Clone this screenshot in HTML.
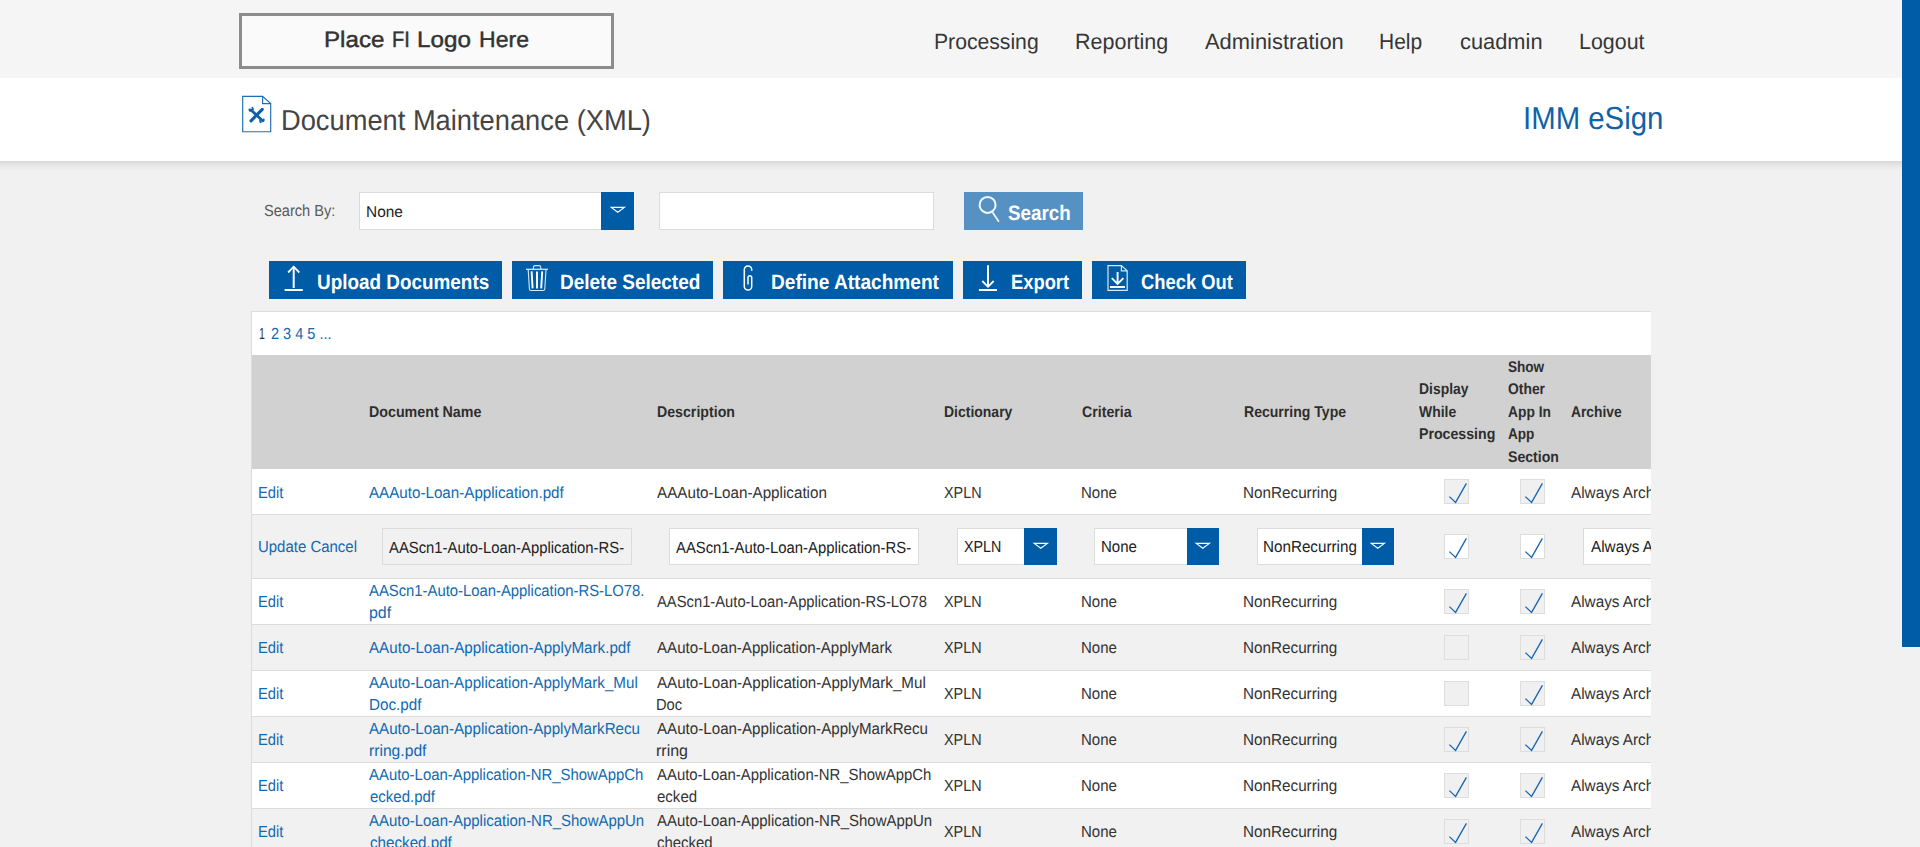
<!DOCTYPE html>
<html><head><meta charset="utf-8"><title>Document Maintenance (XML)</title>
<style>
html,body{margin:0;padding:0}
body{width:1920px;height:847px;overflow:hidden;position:relative;background:#f1f1f1;font-family:"Liberation Sans",sans-serif}
#root{position:absolute;left:0;top:0;width:1920px;height:847px;overflow:hidden}
#root>div{position:absolute}
#root>div>div{position:absolute}
#root>svg{position:absolute}
.t{position:absolute;white-space:pre;transform-origin:0 50%;text-rendering:geometricPrecision;font-family:"Liberation Sans",sans-serif}
#clip{position:absolute;left:0;top:0;width:1651px;height:847px;overflow:hidden}
</style></head><body><div id="root">
<div style="left:0px;top:0px;width:1902px;height:78px;background:#f5f5f5"></div>
<div style="left:0px;top:78px;width:1902px;height:83px;background:#fff"></div>
<div style="left:0px;top:161px;width:1902px;height:10px;background:linear-gradient(to bottom, rgba(0,0,0,.105) 0%, rgba(0,0,0,.07) 25%, rgba(0,0,0,.03) 55%, rgba(0,0,0,0) 100%)"></div>
<div style="left:239px;top:13px;width:375px;height:56px;box-sizing:border-box;border:3px solid #8c8c8c;background:#fafafa"></div>
<div style="left:1902px;top:0px;width:18px;height:647px;background:#005ca6"></div>
<div style="left:359px;top:192px;width:242px;height:38px;box-sizing:border-box;border:1px solid #dcdcdc;border-right:0;background:#fff"></div>
<div style="left:601px;top:192px;width:33px;height:38px;background:#005ca6"><svg width="18" height="10" viewBox="0 0 18 10" style="position:absolute;left:7.8999999999999995px;top:13.0px"><path d="M2.2 2.4 H15.4 L8.8 7.2 Z" fill="none" stroke="#fff" stroke-width="1.1" stroke-linejoin="miter"/></svg></div>
<div style="left:659px;top:192px;width:275px;height:38px;box-sizing:border-box;border:1px solid #dcdcdc;background:#fff"></div>
<div style="left:964px;top:192px;width:119px;height:38px;background:#5591c3"></div>
<div style="left:269px;top:261px;width:233px;height:38px;background:#005ca6"></div>
<div style="left:512px;top:261px;width:201px;height:38px;background:#005ca6"></div>
<div style="left:723px;top:261px;width:230px;height:38px;background:#005ca6"></div>
<div style="left:963px;top:261px;width:119px;height:38px;background:#005ca6"></div>
<div style="left:1092px;top:261px;width:154px;height:38px;background:#005ca6"></div>
<div style="left:251px;top:311px;width:1400px;height:540px;box-sizing:border-box;border:1px solid #dddddd;border-right:0;background:#fff"></div>
<div style="left:252px;top:355px;width:1399px;height:113.6px;background:#d1d1d1"></div>
<div style="left:252px;top:514px;width:1399px;height:1px;background:#dcdcdc"></div>
<div style="left:252px;top:624px;width:1399px;height:1px;background:#dcdcdc"></div>
<div style="left:252px;top:625px;width:1399px;height:45px;background:#f1f1f1"></div>
<div style="left:252px;top:670px;width:1399px;height:1px;background:#dcdcdc"></div>
<div style="left:252px;top:716px;width:1399px;height:1px;background:#dcdcdc"></div>
<div style="left:252px;top:717px;width:1399px;height:45px;background:#f1f1f1"></div>
<div style="left:252px;top:762px;width:1399px;height:1px;background:#dcdcdc"></div>
<div style="left:252px;top:808px;width:1399px;height:1px;background:#dcdcdc"></div>
<div style="left:252px;top:809px;width:1399px;height:45px;background:#f1f1f1"></div>
<div style="left:252px;top:854px;width:1399px;height:1px;background:#dcdcdc"></div>
<div style="left:252px;top:515px;width:1399px;height:63px;background:#f1f1f1"></div>
<div style="left:252px;top:578px;width:1399px;height:1px;background:#dcdcdc"></div>
<div style="left:1444px;top:479px;width:25px;height:25px;box-sizing:border-box;border:1px solid #dddddd;background:#f0f0f0"><svg width="25" height="25" viewBox="0 0 25 25" style="position:absolute;left:-1px;top:-1px"><path d="M5.4 17.6 L11.6 23.4 L22.4 4.4" fill="none" stroke="#1466b3" stroke-width="1.3" stroke-linecap="butt" stroke-linejoin="miter"/></svg></div>
<div style="left:1520px;top:479px;width:25px;height:25px;box-sizing:border-box;border:1px solid #dddddd;background:#f0f0f0"><svg width="25" height="25" viewBox="0 0 25 25" style="position:absolute;left:-1px;top:-1px"><path d="M5.4 17.6 L11.6 23.4 L22.4 4.4" fill="none" stroke="#1466b3" stroke-width="1.3" stroke-linecap="butt" stroke-linejoin="miter"/></svg></div>
<div style="left:1444px;top:589px;width:25px;height:25px;box-sizing:border-box;border:1px solid #dddddd;background:#f0f0f0"><svg width="25" height="25" viewBox="0 0 25 25" style="position:absolute;left:-1px;top:-1px"><path d="M5.4 17.6 L11.6 23.4 L22.4 4.4" fill="none" stroke="#1466b3" stroke-width="1.3" stroke-linecap="butt" stroke-linejoin="miter"/></svg></div>
<div style="left:1520px;top:589px;width:25px;height:25px;box-sizing:border-box;border:1px solid #dddddd;background:#f0f0f0"><svg width="25" height="25" viewBox="0 0 25 25" style="position:absolute;left:-1px;top:-1px"><path d="M5.4 17.6 L11.6 23.4 L22.4 4.4" fill="none" stroke="#1466b3" stroke-width="1.3" stroke-linecap="butt" stroke-linejoin="miter"/></svg></div>
<div style="left:1444px;top:635px;width:25px;height:25px;box-sizing:border-box;border:1px solid #dddddd;background:#f0f0f0"></div>
<div style="left:1520px;top:635px;width:25px;height:25px;box-sizing:border-box;border:1px solid #dddddd;background:#f0f0f0"><svg width="25" height="25" viewBox="0 0 25 25" style="position:absolute;left:-1px;top:-1px"><path d="M5.4 17.6 L11.6 23.4 L22.4 4.4" fill="none" stroke="#1466b3" stroke-width="1.3" stroke-linecap="butt" stroke-linejoin="miter"/></svg></div>
<div style="left:1444px;top:681px;width:25px;height:25px;box-sizing:border-box;border:1px solid #dddddd;background:#f0f0f0"></div>
<div style="left:1520px;top:681px;width:25px;height:25px;box-sizing:border-box;border:1px solid #dddddd;background:#f0f0f0"><svg width="25" height="25" viewBox="0 0 25 25" style="position:absolute;left:-1px;top:-1px"><path d="M5.4 17.6 L11.6 23.4 L22.4 4.4" fill="none" stroke="#1466b3" stroke-width="1.3" stroke-linecap="butt" stroke-linejoin="miter"/></svg></div>
<div style="left:1444px;top:727px;width:25px;height:25px;box-sizing:border-box;border:1px solid #dddddd;background:#f0f0f0"><svg width="25" height="25" viewBox="0 0 25 25" style="position:absolute;left:-1px;top:-1px"><path d="M5.4 17.6 L11.6 23.4 L22.4 4.4" fill="none" stroke="#1466b3" stroke-width="1.3" stroke-linecap="butt" stroke-linejoin="miter"/></svg></div>
<div style="left:1520px;top:727px;width:25px;height:25px;box-sizing:border-box;border:1px solid #dddddd;background:#f0f0f0"><svg width="25" height="25" viewBox="0 0 25 25" style="position:absolute;left:-1px;top:-1px"><path d="M5.4 17.6 L11.6 23.4 L22.4 4.4" fill="none" stroke="#1466b3" stroke-width="1.3" stroke-linecap="butt" stroke-linejoin="miter"/></svg></div>
<div style="left:1444px;top:773px;width:25px;height:25px;box-sizing:border-box;border:1px solid #dddddd;background:#f0f0f0"><svg width="25" height="25" viewBox="0 0 25 25" style="position:absolute;left:-1px;top:-1px"><path d="M5.4 17.6 L11.6 23.4 L22.4 4.4" fill="none" stroke="#1466b3" stroke-width="1.3" stroke-linecap="butt" stroke-linejoin="miter"/></svg></div>
<div style="left:1520px;top:773px;width:25px;height:25px;box-sizing:border-box;border:1px solid #dddddd;background:#f0f0f0"><svg width="25" height="25" viewBox="0 0 25 25" style="position:absolute;left:-1px;top:-1px"><path d="M5.4 17.6 L11.6 23.4 L22.4 4.4" fill="none" stroke="#1466b3" stroke-width="1.3" stroke-linecap="butt" stroke-linejoin="miter"/></svg></div>
<div style="left:1444px;top:819px;width:25px;height:25px;box-sizing:border-box;border:1px solid #dddddd;background:#f0f0f0"><svg width="25" height="25" viewBox="0 0 25 25" style="position:absolute;left:-1px;top:-1px"><path d="M5.4 17.6 L11.6 23.4 L22.4 4.4" fill="none" stroke="#1466b3" stroke-width="1.3" stroke-linecap="butt" stroke-linejoin="miter"/></svg></div>
<div style="left:1520px;top:819px;width:25px;height:25px;box-sizing:border-box;border:1px solid #dddddd;background:#f0f0f0"><svg width="25" height="25" viewBox="0 0 25 25" style="position:absolute;left:-1px;top:-1px"><path d="M5.4 17.6 L11.6 23.4 L22.4 4.4" fill="none" stroke="#1466b3" stroke-width="1.3" stroke-linecap="butt" stroke-linejoin="miter"/></svg></div>
<div style="left:1444px;top:534px;width:25px;height:25px;box-sizing:border-box;border:1px solid #dddddd;background:#fff"><svg width="25" height="25" viewBox="0 0 25 25" style="position:absolute;left:-1px;top:-1px"><path d="M5.4 17.6 L11.6 23.4 L22.4 4.4" fill="none" stroke="#1466b3" stroke-width="1.3" stroke-linecap="butt" stroke-linejoin="miter"/></svg></div>
<div style="left:1520px;top:534px;width:25px;height:25px;box-sizing:border-box;border:1px solid #dddddd;background:#fff"><svg width="25" height="25" viewBox="0 0 25 25" style="position:absolute;left:-1px;top:-1px"><path d="M5.4 17.6 L11.6 23.4 L22.4 4.4" fill="none" stroke="#1466b3" stroke-width="1.3" stroke-linecap="butt" stroke-linejoin="miter"/></svg></div>
<div style="left:382px;top:528px;width:250px;height:37px;box-sizing:border-box;border:1px solid #dcdcdc;background:#f1f1f1"></div>
<div style="left:669px;top:528px;width:250px;height:37px;box-sizing:border-box;border:1px solid #dcdcdc;background:#fff"></div>
<div style="left:957px;top:528px;width:67px;height:37px;box-sizing:border-box;border:1px solid #dcdcdc;border-right:0;background:#fff"></div>
<div style="left:1024px;top:528px;width:33px;height:37px;background:#005ca6"><svg width="18" height="10" viewBox="0 0 18 10" style="position:absolute;left:7.8999999999999995px;top:12.5px"><path d="M2.2 2.4 H15.4 L8.8 7.2 Z" fill="none" stroke="#fff" stroke-width="1.1" stroke-linejoin="miter"/></svg></div>
<div style="left:1094px;top:528px;width:93px;height:37px;box-sizing:border-box;border:1px solid #dcdcdc;border-right:0;background:#fff"></div>
<div style="left:1187px;top:528px;width:32px;height:37px;background:#005ca6"><svg width="18" height="10" viewBox="0 0 18 10" style="position:absolute;left:7.3999999999999995px;top:12.5px"><path d="M2.2 2.4 H15.4 L8.8 7.2 Z" fill="none" stroke="#fff" stroke-width="1.1" stroke-linejoin="miter"/></svg></div>
<div style="left:1257px;top:528px;width:105px;height:37px;box-sizing:border-box;border:1px solid #dcdcdc;border-right:0;background:#fff"></div>
<div style="left:1362px;top:528px;width:32px;height:37px;background:#005ca6"><svg width="18" height="10" viewBox="0 0 18 10" style="position:absolute;left:7.3999999999999995px;top:12.5px"><path d="M2.2 2.4 H15.4 L8.8 7.2 Z" fill="none" stroke="#fff" stroke-width="1.1" stroke-linejoin="miter"/></svg></div>
<div style="left:1583px;top:528px;width:68px;height:37px;box-sizing:border-box;border:1px solid #dcdcdc;border-right:0;background:#fff"></div>
<svg width="1920" height="847" viewBox="0 0 1920 847" style="left:0;top:0;pointer-events:none">
<!-- title document icon -->
<g fill="none" stroke="#1a70b8" stroke-width="1.15" stroke-linejoin="miter">
<path d="M242.7 96.4 H262.6 L270.7 103.6 V131.7 H242.7 Z"/>
<path d="M262.6 96.4 V103.6 H270.7"/>
</g>
<g fill="none" stroke="#0d5fae" stroke-linecap="round">
<path d="M251.0 109.9 L262.0 120.2" stroke-width="2.7"/>
<path d="M262.3 109.3 L251.0 120.8" stroke-width="3.1"/>
<path d="M249.3 109.2 q-0.2 2.0 1.8 1.8 M252.2 107.6 q1.4 1.0 0.4 2.6" stroke-width="1.6"/>
<path d="M263.8 119.4 q0.4 2.0 -1.4 2.0 M260.8 122.4 q-1.4 -0.8 -0.4 -2.4" stroke-width="1.6"/>
</g>
<!-- search magnifier -->
<g fill="none" stroke="#fff" stroke-opacity=".93">
<circle cx="987.6" cy="204.9" r="8" stroke-width="2"/>
<path d="M992.5 212.2 L998.9 221.8" stroke-width="1.7"/>
</g>
<!-- upload -->
<g fill="none" stroke="#fff" stroke-width="2">
<path d="M293.7 288 V266.6"/><path d="M288.1 272.5 L293.7 266.7 L299.3 272.5" stroke-width="1.8"/><path d="M284.6 290 H302.8"/>
</g>
<!-- trash -->
<g fill="none" stroke="#fff">
<path d="M526 269.3 H548" stroke-width="1.2" stroke-opacity=".9"/>
<path d="M533.4 269 V267.4 a1.8 1.8 0 0 1 1.8 -1.8 h3.8 a1.8 1.8 0 0 1 1.8 1.8 V269" stroke-width="1.1" stroke-opacity=".85"/>
<path d="M528.2 269.6 L529.4 289 a1.6 1.6 0 0 0 1.6 1.5 h12.2 a1.6 1.6 0 0 0 1.6 -1.5 L546 269.6" stroke-width="1.1" stroke-opacity=".85"/>
<path d="M531.6 271.4 L532.6 288.4 M537 271.4 V288.4 M542.2 271.4 L541.2 288.4" stroke-width="1.9"/>
</g>
<!-- paperclip -->
<path d="M751.7 270.8 V269.6 a3.7 3.7 0 0 0 -7.4 0 V286.4 a3.7 3.7 0 0 0 7.4 0 V277.6 a1.85 1.85 0 0 0 -3.7 0 V284.6" fill="none" stroke="#fff" stroke-width="1.5"/>
<!-- export/download -->
<g fill="none" stroke="#fff" stroke-width="2">
<path d="M988 265.3 V286.6"/><path d="M982.3 281 L988 286.8 L993.7 281" stroke-width="1.8"/><path d="M978.9 290 H997"/>
</g>
<!-- check out -->
<g fill="none" stroke="#fff">
<path d="M1108 265.6 H1121.4 L1127.2 270.8 V290.4 H1108 Z M1121.4 265.6 V270.8 H1127.2" stroke-width="1.2" stroke-opacity=".85"/>
<path d="M1117.6 272 V283.8 M1111.8 278.2 L1117.6 284 L1123.4 278.2 M1110 287 H1125" stroke-width="1.9"/>
</g>
</svg>

<span class="t" style="left:934.04px;top:27.00px;font-size:22.0px;line-height:29px;font-weight:400;color:#363636;transform:scaleX(0.9616)">Processing</span>
<span class="t" style="left:1075.02px;top:27.00px;font-size:22.0px;line-height:29px;font-weight:400;color:#363636;transform:scaleX(0.9769)">Reporting</span>
<span class="t" style="left:1205.00px;top:27.00px;font-size:22.0px;line-height:29px;font-weight:400;color:#363636;transform:scaleX(0.9953)">Administration</span>
<span class="t" style="left:1379.35px;top:27.00px;font-size:22.0px;line-height:29px;font-weight:400;color:#363636;transform:scaleX(0.9543)">Help</span>
<span class="t" style="left:1460.00px;top:27.00px;font-size:22.0px;line-height:29px;font-weight:400;color:#363636;transform:scaleX(0.9924)">cuadmin</span>
<span class="t" style="left:1579.03px;top:27.00px;font-size:22.0px;line-height:29px;font-weight:400;color:#363636;transform:scaleX(0.9732)">Logout</span>
<span class="t" style="left:323.82px;top:25.00px;font-size:22.3px;line-height:29px;font-weight:400;color:#333;transform:scaleX(1.0832);-webkit-text-stroke:0.45px #333">Place</span>
<span class="t" style="left:391.90px;top:25.00px;font-size:22.3px;line-height:29px;font-weight:400;color:#333;transform:scaleX(0.8967);-webkit-text-stroke:0.45px #333">FI</span>
<span class="t" style="left:416.66px;top:25.00px;font-size:22.3px;line-height:29px;font-weight:400;color:#333;transform:scaleX(1.0871);-webkit-text-stroke:0.45px #333">Logo</span>
<span class="t" style="left:479.07px;top:25.00px;font-size:22.3px;line-height:29px;font-weight:400;color:#333;transform:scaleX(1.0335);-webkit-text-stroke:0.45px #333">Here</span>
<span class="t" style="left:281.11px;top:103.00px;font-size:28.8px;line-height:37px;font-weight:400;color:#444;transform:scaleX(0.9472)">Document Maintenance (XML)</span>
<span class="t" style="left:1523.15px;top:98.00px;font-size:31.8px;line-height:41px;font-weight:400;color:#0f62a8;transform:scaleX(0.9239)">IMM eSign</span>
<span class="t" style="left:263.75px;top:201.00px;font-size:16.1px;line-height:21px;font-weight:400;color:#5a5a5a;transform:scaleX(0.9062)">Search By:</span>
<span class="t" style="left:365.51px;top:203.00px;font-size:15.6px;line-height:20px;font-weight:400;color:#222;transform:scaleX(0.9900)">None</span>
<span class="t" style="left:1008.00px;top:200.00px;font-size:20.9px;line-height:27px;font-weight:700;color:#ffffff;transform:scaleX(0.8996)">Search</span>
<span class="t" style="left:317.10px;top:269.00px;font-size:20.9px;line-height:27px;font-weight:700;color:#fff;transform:scaleX(0.9047)">Upload Documents</span>
<span class="t" style="left:560.34px;top:269.00px;font-size:20.9px;line-height:27px;font-weight:700;color:#fff;transform:scaleX(0.9088)">Delete Selected</span>
<span class="t" style="left:771.09px;top:269.00px;font-size:20.9px;line-height:27px;font-weight:700;color:#fff;transform:scaleX(0.9137)">Define Attachment</span>
<span class="t" style="left:1011.12px;top:269.00px;font-size:20.9px;line-height:27px;font-weight:700;color:#fff;transform:scaleX(0.8780)">Export</span>
<span class="t" style="left:1141.00px;top:269.00px;font-size:20.9px;line-height:27px;font-weight:700;color:#fff;transform:scaleX(0.8802)">Check Out</span>
<span class="t" style="left:259.15px;top:324.00px;font-size:16.1px;line-height:21px;font-weight:400;color:#333;transform:scaleX(0.6500)">1</span>
<span class="t" style="left:270.80px;top:324.00px;font-size:16.1px;line-height:21px;font-weight:400;color:#1269b0;transform:scaleX(0.9020)">2 3 4 5 ...</span>
<span class="t" style="left:368.78px;top:403.00px;font-size:15.5px;line-height:20px;font-weight:700;color:#2e2e2e;transform:scaleX(0.9188)">Document Name</span>
<span class="t" style="left:656.59px;top:403.00px;font-size:15.5px;line-height:20px;font-weight:700;color:#2e2e2e;transform:scaleX(0.9141)">Description</span>
<span class="t" style="left:944.10px;top:403.00px;font-size:15.5px;line-height:20px;font-weight:700;color:#2e2e2e;transform:scaleX(0.9019)">Dictionary</span>
<span class="t" style="left:1082.20px;top:403.00px;font-size:15.5px;line-height:20px;font-weight:700;color:#2e2e2e;transform:scaleX(0.9149)">Criteria</span>
<span class="t" style="left:1243.59px;top:403.00px;font-size:15.5px;line-height:20px;font-weight:700;color:#2e2e2e;transform:scaleX(0.9069)">Recurring Type</span>
<span class="t" style="left:1418.60px;top:380.00px;font-size:15.5px;line-height:20px;font-weight:700;color:#2e2e2e;transform:scaleX(0.8988)">Display</span>
<span class="t" style="left:1419.20px;top:403.00px;font-size:15.5px;line-height:20px;font-weight:700;color:#2e2e2e;transform:scaleX(0.8991)">While</span>
<span class="t" style="left:1418.59px;top:425.00px;font-size:15.5px;line-height:20px;font-weight:700;color:#2e2e2e;transform:scaleX(0.9136)">Processing</span>
<span class="t" style="left:1507.70px;top:358.00px;font-size:15.5px;line-height:20px;font-weight:700;color:#2e2e2e;transform:scaleX(0.8752)">Show</span>
<span class="t" style="left:1507.70px;top:380.00px;font-size:15.5px;line-height:20px;font-weight:700;color:#2e2e2e;transform:scaleX(0.8957)">Other</span>
<span class="t" style="left:1507.70px;top:403.00px;font-size:15.5px;line-height:20px;font-weight:700;color:#2e2e2e;transform:scaleX(0.8902)">App In</span>
<span class="t" style="left:1507.70px;top:425.00px;font-size:15.5px;line-height:20px;font-weight:700;color:#2e2e2e;transform:scaleX(0.8766)">App</span>
<span class="t" style="left:1507.70px;top:448.00px;font-size:15.5px;line-height:20px;font-weight:700;color:#2e2e2e;transform:scaleX(0.9097)">Section</span>
<span class="t" style="left:1571.30px;top:403.00px;font-size:15.5px;line-height:20px;font-weight:700;color:#2e2e2e;transform:scaleX(0.8910)">Archive</span>
<span class="t" style="left:258.08px;top:483.00px;font-size:16.1px;line-height:21px;font-weight:400;color:#1269b0;transform:scaleX(0.9171)">Edit</span>
<span class="t" style="left:369.25px;top:483.00px;font-size:16.1px;line-height:21px;font-weight:400;color:#1269b0;transform:scaleX(0.9423)">AAAuto-Loan-Application.pdf</span>
<span class="t" style="left:656.75px;top:483.00px;font-size:16.1px;line-height:21px;font-weight:400;color:#333333;transform:scaleX(0.9448)">AAAuto-Loan-Application</span>
<span class="t" style="left:943.90px;top:483.00px;font-size:16.1px;line-height:21px;font-weight:400;color:#333333;transform:scaleX(0.8933)">XPLN</span>
<span class="t" style="left:1080.87px;top:483.00px;font-size:16.1px;line-height:21px;font-weight:400;color:#333333;transform:scaleX(0.9327)">None</span>
<span class="t" style="left:1243.25px;top:483.00px;font-size:16.1px;line-height:21px;font-weight:400;color:#333333;transform:scaleX(0.9482)">NonRecurring</span>
<span class="t" style="left:258.08px;top:592.00px;font-size:16.1px;line-height:21px;font-weight:400;color:#1269b0;transform:scaleX(0.9171)">Edit</span>
<span class="t" style="left:369.25px;top:581.00px;font-size:16.1px;line-height:21px;font-weight:400;color:#1269b0;transform:scaleX(0.9216)">AAScn1-Auto-Loan-Application-RS-LO78.</span>
<span class="t" style="left:368.56px;top:603.00px;font-size:16.1px;line-height:21px;font-weight:400;color:#1269b0;transform:scaleX(0.9908)">pdf</span>
<span class="t" style="left:656.75px;top:592.00px;font-size:16.1px;line-height:21px;font-weight:400;color:#333333;transform:scaleX(0.9172)">AAScn1-Auto-Loan-Application-RS-LO78</span>
<span class="t" style="left:943.90px;top:592.00px;font-size:16.1px;line-height:21px;font-weight:400;color:#333333;transform:scaleX(0.8933)">XPLN</span>
<span class="t" style="left:1080.87px;top:592.00px;font-size:16.1px;line-height:21px;font-weight:400;color:#333333;transform:scaleX(0.9327)">None</span>
<span class="t" style="left:1243.25px;top:592.00px;font-size:16.1px;line-height:21px;font-weight:400;color:#333333;transform:scaleX(0.9482)">NonRecurring</span>
<span class="t" style="left:258.08px;top:638.00px;font-size:16.1px;line-height:21px;font-weight:400;color:#1269b0;transform:scaleX(0.9171)">Edit</span>
<span class="t" style="left:369.25px;top:638.00px;font-size:16.1px;line-height:21px;font-weight:400;color:#1269b0;transform:scaleX(0.9430)">AAuto-Loan-Application-ApplyMark.pdf</span>
<span class="t" style="left:656.75px;top:638.00px;font-size:16.1px;line-height:21px;font-weight:400;color:#333333;transform:scaleX(0.9386)">AAuto-Loan-Application-ApplyMark</span>
<span class="t" style="left:943.90px;top:638.00px;font-size:16.1px;line-height:21px;font-weight:400;color:#333333;transform:scaleX(0.8933)">XPLN</span>
<span class="t" style="left:1080.87px;top:638.00px;font-size:16.1px;line-height:21px;font-weight:400;color:#333333;transform:scaleX(0.9327)">None</span>
<span class="t" style="left:1243.25px;top:638.00px;font-size:16.1px;line-height:21px;font-weight:400;color:#333333;transform:scaleX(0.9482)">NonRecurring</span>
<span class="t" style="left:258.08px;top:684.00px;font-size:16.1px;line-height:21px;font-weight:400;color:#1269b0;transform:scaleX(0.9171)">Edit</span>
<span class="t" style="left:369.25px;top:673.00px;font-size:16.1px;line-height:21px;font-weight:400;color:#1269b0;transform:scaleX(0.9418)">AAuto-Loan-Application-ApplyMark_Mul</span>
<span class="t" style="left:368.60px;top:695.00px;font-size:16.1px;line-height:21px;font-weight:400;color:#1269b0;transform:scaleX(0.9456)">Doc.pdf</span>
<span class="t" style="left:656.75px;top:673.00px;font-size:16.1px;line-height:21px;font-weight:400;color:#333333;transform:scaleX(0.9418)">AAuto-Loan-Application-ApplyMark_Mul</span>
<span class="t" style="left:656.14px;top:695.00px;font-size:16.1px;line-height:21px;font-weight:400;color:#333333;transform:scaleX(0.9139)">Doc</span>
<span class="t" style="left:943.90px;top:684.00px;font-size:16.1px;line-height:21px;font-weight:400;color:#333333;transform:scaleX(0.8933)">XPLN</span>
<span class="t" style="left:1080.87px;top:684.00px;font-size:16.1px;line-height:21px;font-weight:400;color:#333333;transform:scaleX(0.9327)">None</span>
<span class="t" style="left:1243.25px;top:684.00px;font-size:16.1px;line-height:21px;font-weight:400;color:#333333;transform:scaleX(0.9482)">NonRecurring</span>
<span class="t" style="left:258.08px;top:730.00px;font-size:16.1px;line-height:21px;font-weight:400;color:#1269b0;transform:scaleX(0.9171)">Edit</span>
<span class="t" style="left:369.25px;top:719.00px;font-size:16.1px;line-height:21px;font-weight:400;color:#1269b0;transform:scaleX(0.9408)">AAuto-Loan-Application-ApplyMarkRecu</span>
<span class="t" style="left:368.58px;top:741.00px;font-size:16.1px;line-height:21px;font-weight:400;color:#1269b0;transform:scaleX(0.9732)">rring.pdf</span>
<span class="t" style="left:656.75px;top:719.00px;font-size:16.1px;line-height:21px;font-weight:400;color:#333333;transform:scaleX(0.9408)">AAuto-Loan-Application-ApplyMarkRecu</span>
<span class="t" style="left:656.06px;top:741.00px;font-size:16.1px;line-height:21px;font-weight:400;color:#333333;transform:scaleX(0.9919)">rring</span>
<span class="t" style="left:943.90px;top:730.00px;font-size:16.1px;line-height:21px;font-weight:400;color:#333333;transform:scaleX(0.8933)">XPLN</span>
<span class="t" style="left:1080.87px;top:730.00px;font-size:16.1px;line-height:21px;font-weight:400;color:#333333;transform:scaleX(0.9327)">None</span>
<span class="t" style="left:1243.25px;top:730.00px;font-size:16.1px;line-height:21px;font-weight:400;color:#333333;transform:scaleX(0.9482)">NonRecurring</span>
<span class="t" style="left:258.08px;top:776.00px;font-size:16.1px;line-height:21px;font-weight:400;color:#1269b0;transform:scaleX(0.9171)">Edit</span>
<span class="t" style="left:369.25px;top:765.00px;font-size:16.1px;line-height:21px;font-weight:400;color:#1269b0;transform:scaleX(0.9266)">AAuto-Loan-Application-NR_ShowAppCh</span>
<span class="t" style="left:369.55px;top:787.00px;font-size:16.1px;line-height:21px;font-weight:400;color:#1269b0;transform:scaleX(0.9315)">ecked.pdf</span>
<span class="t" style="left:656.75px;top:765.00px;font-size:16.1px;line-height:21px;font-weight:400;color:#333333;transform:scaleX(0.9266)">AAuto-Loan-Application-NR_ShowAppCh</span>
<span class="t" style="left:657.05px;top:787.00px;font-size:16.1px;line-height:21px;font-weight:400;color:#333333;transform:scaleX(0.9334)">ecked</span>
<span class="t" style="left:943.90px;top:776.00px;font-size:16.1px;line-height:21px;font-weight:400;color:#333333;transform:scaleX(0.8933)">XPLN</span>
<span class="t" style="left:1080.87px;top:776.00px;font-size:16.1px;line-height:21px;font-weight:400;color:#333333;transform:scaleX(0.9327)">None</span>
<span class="t" style="left:1243.25px;top:776.00px;font-size:16.1px;line-height:21px;font-weight:400;color:#333333;transform:scaleX(0.9482)">NonRecurring</span>
<span class="t" style="left:258.08px;top:822.00px;font-size:16.1px;line-height:21px;font-weight:400;color:#1269b0;transform:scaleX(0.9171)">Edit</span>
<span class="t" style="left:369.25px;top:811.00px;font-size:16.1px;line-height:21px;font-weight:400;color:#1269b0;transform:scaleX(0.9293)">AAuto-Loan-Application-NR_ShowAppUn</span>
<span class="t" style="left:369.55px;top:833.00px;font-size:16.1px;line-height:21px;font-weight:400;color:#1269b0;transform:scaleX(0.9426)">checked.pdf</span>
<span class="t" style="left:656.75px;top:811.00px;font-size:16.1px;line-height:21px;font-weight:400;color:#333333;transform:scaleX(0.9293)">AAuto-Loan-Application-NR_ShowAppUn</span>
<span class="t" style="left:657.05px;top:833.00px;font-size:16.1px;line-height:21px;font-weight:400;color:#333333;transform:scaleX(0.9272)">checked</span>
<span class="t" style="left:943.90px;top:822.00px;font-size:16.1px;line-height:21px;font-weight:400;color:#333333;transform:scaleX(0.8933)">XPLN</span>
<span class="t" style="left:1080.87px;top:822.00px;font-size:16.1px;line-height:21px;font-weight:400;color:#333333;transform:scaleX(0.9327)">None</span>
<span class="t" style="left:1243.25px;top:822.00px;font-size:16.1px;line-height:21px;font-weight:400;color:#333333;transform:scaleX(0.9482)">NonRecurring</span>
<span class="t" style="left:258.07px;top:537.00px;font-size:16.1px;line-height:21px;font-weight:400;color:#1269b0;transform:scaleX(0.9296)">Update Cancel</span>
<span class="t" style="left:389.20px;top:538.00px;font-size:16.1px;line-height:21px;font-weight:400;color:#222;transform:scaleX(0.9221)">AAScn1-Auto-Loan-Application-RS-</span>
<span class="t" style="left:676.40px;top:538.00px;font-size:16.1px;line-height:21px;font-weight:400;color:#222;transform:scaleX(0.9221)">AAScn1-Auto-Loan-Application-RS-</span>
<span class="t" style="left:964.25px;top:537.00px;font-size:16.1px;line-height:21px;font-weight:400;color:#222;transform:scaleX(0.8873)">XPLN</span>
<span class="t" style="left:1100.82px;top:537.00px;font-size:16.1px;line-height:21px;font-weight:400;color:#222;transform:scaleX(0.9327)">None</span>
<span class="t" style="left:1263.30px;top:537.00px;font-size:16.1px;line-height:21px;font-weight:400;color:#222;transform:scaleX(0.9452)">NonRecurring</span>
<div id="clip">
<span class="t" style="left:1571.00px;top:483.00px;font-size:16.1px;line-height:21px;font-weight:400;color:#333333;transform:scaleX(0.9500)">Always Arch</span>
<span class="t" style="left:1571.00px;top:592.00px;font-size:16.1px;line-height:21px;font-weight:400;color:#333333;transform:scaleX(0.9500)">Always Arch</span>
<span class="t" style="left:1571.00px;top:638.00px;font-size:16.1px;line-height:21px;font-weight:400;color:#333333;transform:scaleX(0.9500)">Always Arch</span>
<span class="t" style="left:1571.00px;top:684.00px;font-size:16.1px;line-height:21px;font-weight:400;color:#333333;transform:scaleX(0.9500)">Always Arch</span>
<span class="t" style="left:1571.00px;top:730.00px;font-size:16.1px;line-height:21px;font-weight:400;color:#333333;transform:scaleX(0.9500)">Always Arch</span>
<span class="t" style="left:1571.00px;top:776.00px;font-size:16.1px;line-height:21px;font-weight:400;color:#333333;transform:scaleX(0.9500)">Always Arch</span>
<span class="t" style="left:1571.00px;top:822.00px;font-size:16.1px;line-height:21px;font-weight:400;color:#333333;transform:scaleX(0.9500)">Always Arch</span>
<span class="t" style="left:1590.60px;top:537.00px;font-size:16.1px;line-height:21px;font-weight:400;color:#222;transform:scaleX(0.9500)">Always A</span>
</div>
</div></body></html>
